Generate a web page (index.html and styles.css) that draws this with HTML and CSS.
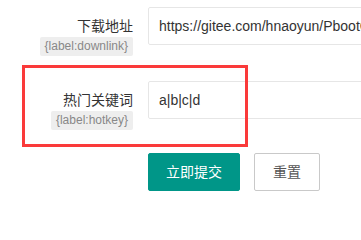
FILE: index.html
```html
<!DOCTYPE html>
<html lang="zh-CN">
<head>
<meta charset="utf-8">
<title>表单</title>
<link rel="stylesheet" href="styles.css">
</head>
<body>
<form class="form">
  <div class="item">
    <div class="label-col">
      <div class="label">下载地址</div>
      <span class="tag">{label:downlink}</span>
    </div>
    <div class="field"><input class="input" type="text" value="https://gitee.com/hnaoyun/PbootCMS.git"></div>
  </div>
  <div class="item item-second">
    <div class="label-col">
      <div class="label">热门关键词</div>
      <span class="tag">{label:hotkey}</span>
    </div>
    <div class="field"><input class="input" type="text" value="a|b|c|d"></div>
  </div>
  <div class="actions">
    <button class="btn btn-primary" type="button">立即提交</button>
    <button class="btn btn-default" type="button">重置</button>
  </div>
  <div class="mark"></div>
</form>
</body>
</html>
```
FILE: styles.css
```css
html, body {
  margin: 0;
  padding: 0;
  background: #fff;
  overflow: hidden;
}
body {
  font-family: "Liberation Sans", "Noto Sans CJK SC", sans-serif;
  font-size: 14px;
  color: #333;
}
.form {
  position: relative;
  padding-top: 7px;
}
.item {
  display: flex;
  align-items: flex-start;
}
.item-second {
  margin-top: 25px;
}
.label-col {
  width: 148px;
  box-sizing: border-box;
  padding-right: 15px;
  display: flex;
  flex-direction: column;
  align-items: flex-end;
  flex-shrink: 0;
}
.label {
  padding-top: 9px;
  line-height: 20px;
  font-size: 14px;
  color: #333;
  white-space: nowrap;
}
.tag {
  margin-top: 1px;
  height: 19px;
  line-height: 19px;
  padding: 0 5px;
  font-size: 12px;
  color: #888;
  background: #eee;
  border-radius: 2px;
  white-space: nowrap;
}
.field {
  flex: 1;
  min-width: 0;
  overflow: hidden;
}
.input {
  display: block;
  width: 420px;
  height: 38px;
  box-sizing: border-box;
  margin: 0;
  padding: 0 10px;
  border: 1px solid #e6e6e6;
  border-radius: 2px;
  font-family: "Liberation Sans", "Noto Sans CJK SC", sans-serif;
  font-size: 14px;
  color: #333;
  background: #fff;
  outline: none;
}
.actions {
  display: flex;
  gap: 14px;
  margin-top: 23px;
  padding-left: 148px;
}
.btn {
  height: 38px;
  box-sizing: border-box;
  padding: 0;
  border-radius: 2px;
  font-family: "Liberation Sans", "Noto Sans CJK SC", sans-serif;
  font-size: 14px;
  line-height: 36px;
  text-align: center;
  white-space: nowrap;
  cursor: pointer;
  margin: 0;
}
.btn-primary {
  width: 92px;
  background: #009688;
  border: 1px solid #009688;
  color: #fff;
}
.btn-default {
  width: 66px;
  background: #fff;
  border: 1px solid #c9c9c9;
  color: #555;
}
.mark {
  position: absolute;
  left: 22px;
  top: 65px;
  width: 226px;
  height: 82px;
  box-sizing: border-box;
  border: 3px solid #fa3a3a;
  pointer-events: none;
}
```
